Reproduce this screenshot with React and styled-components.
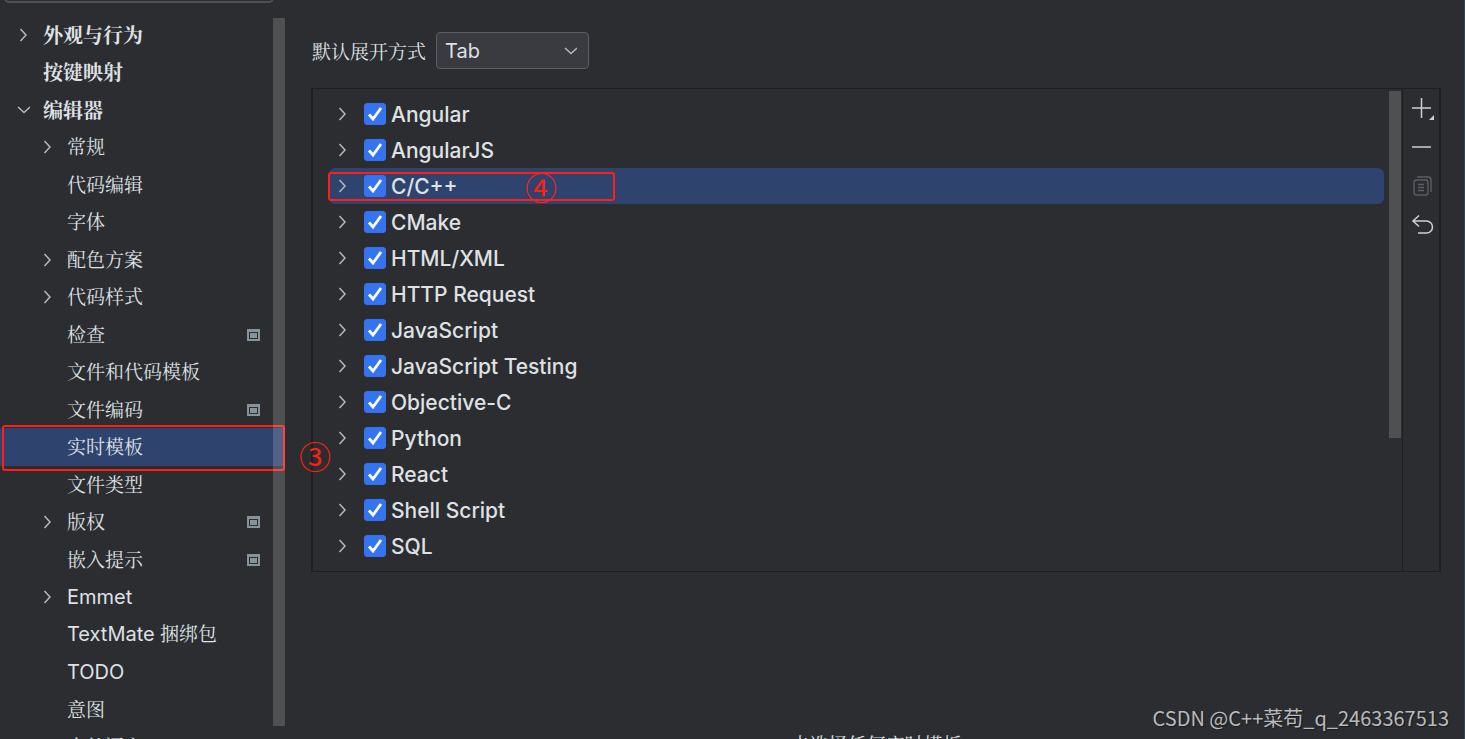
import { useState } from 'react';
import styled, { createGlobalStyle } from 'styled-components';

const GlobalStyle = createGlobalStyle`
	* {
		box-sizing: border-box;
	}

	body {
		margin: 0;
		background-color: #2b2d30;
		color: #dfe1e5;
		font-family: Inter, 'Noto Serif CJK SC', 'Noto Sans CJK SC', sans-serif;
		font-size: 20px;
	}

	button,
	input,
	select {
		font: inherit;
		color: inherit;
	}
`;

const sections = [
	{ title: '外观与行为', level: 0, arrow: 'right' },
	{ title: '按键映射', level: 0 },
	{ title: '编辑器', level: 0, arrow: 'down' },
	{ title: '常规', level: 1, arrow: 'right' },
	{ title: '代码编辑', level: 1 },
	{ title: '字体', level: 1 },
	{ title: '配色方案', level: 1, arrow: 'right' },
	{ title: '代码样式', level: 1, arrow: 'right' },
	{ title: '检查', level: 1, project: true },
	{ title: '文件和代码模板', level: 1 },
	{ title: '文件编码', level: 1, project: true },
	{ title: '实时模板', level: 1, marker: '③' },
	{ title: '文件类型', level: 1 },
	{ title: '版权', level: 1, arrow: 'right', project: true },
	{ title: '嵌入提示', level: 1, project: true },
	{ title: 'Emmet', level: 1, arrow: 'right', latin: true },
	{ title: 'TextMate', suffix: '捆绑包', level: 1, latin: true },
	{ title: 'TODO', level: 1, latin: true },
	{ title: '意图', level: 1 },
	{ title: '自然语言', level: 1 },
];

const groups = [
	'Angular',
	'AngularJS',
	'C/C++',
	'CMake',
	'HTML/XML',
	'HTTP Request',
	'JavaScript',
	'JavaScript Testing',
	'Objective-C',
	'Python',
	'React',
	'Shell Script',
	'SQL',
];

const Arrow = ({ direction = 'right' }) => (
	<svg width="14" height="14" viewBox="0 0 14 14" fill="none" stroke="#b4b8bf" strokeWidth="1.5">
		<path d={direction === 'down' ? 'M2 4l6 5.5L14 4' : 'M4.5 1l5.5 6-5.5 6'} />
	</svg>
);

const ProjectIcon = () => (
	<svg width="13" height="12" viewBox="0 0 13 12">
		<path fill="#87939a" fillRule="evenodd" d="M0 0h13v12H0zM2 3v7h9V3z" />
		<path fill="#87939a" d="M3 4h7v5H3z" />
	</svg>
);

const AddIcon = () => (
	<svg width="24" height="24" viewBox="0 0 24 24" fill="none" stroke="#ced0d6" strokeWidth="1.5">
		<path d="M10.5 1v20M1 11h19" />
		<path d="M23 18v5h-5z" fill="#ced0d6" stroke="none" />
	</svg>
);

const RemoveIcon = () => (
	<svg width="24" height="24" viewBox="0 0 24 24" stroke="#ced0d6" strokeWidth="1.5">
		<path d="M1 11h19" />
	</svg>
);

const CopyIcon = () => (
	<svg width="24" height="24" viewBox="0 0 24 24" fill="none" stroke="#5a5d63" strokeWidth="1.4">
		<rect x="3" y="5" width="14" height="15" rx="2.5" />
		<path d="M6 2h11a3 3 0 0 1 3 3v12M7 9.5h6M7 12.5h6M7 15.5h6" />
	</svg>
);

const RevertIcon = () => (
	<svg width="24" height="24" viewBox="0 0 24 24" fill="none" stroke="#ced0d6" strokeWidth="1.5">
		<path d="M8 1.5 2 7l6 5.5M2 7h13.5a6 6 0 0 1 0 12H7" />
	</svg>
);

const Page = styled.div`
	display: flex;
	position: relative;
	height: 100vh;
	overflow: hidden;
`;

const Sidebar = styled.aside`
	position: relative;
	flex: 0 0 285px;
	min-width: 0;
`;

const SearchArea = styled.div`
	display: flex;
	align-items: flex-end;
	height: 3px;
	margin: 0 11px 13px 4px;
	overflow: hidden;
`;

const SearchInput = styled.input`
	flex: 1;
	min-width: 0;
	height: 36px;
	border: 2px solid #4e5157;
	border-radius: 5px;
	background-color: #2b2d30;
`;

const Scrollbar = styled.div`
	position: absolute;
	top: ${({ $top }) => $top}px;
	right: ${({ $right = 0 }) => $right}px;
	bottom: ${({ $bottom }) => $bottom};
	width: 12px;
	background-color: rgba(255, 255, 255, 0.17);
`;

const SectionList = styled.ul`
	margin: 0;
	padding: 0;
	list-style: none;
`;

const SectionItem = styled.li`
	display: flex;
	align-items: center;
	position: relative;
	height: 37px;
	padding-left: ${({ $level }) => 16 + $level * 24}px;
	padding-right: 25px;
	background-color: ${({ $selected }) => ($selected ? '#2e436e' : 'transparent')};

	&:nth-child(even) {
		height: 38px;
	}
`;

const ArrowSlot = styled.span`
	display: flex;
	flex: 0 0 27px;
`;

const SectionButton = styled.button`
	flex: 1;
	padding: ${({ $latin }) => ($latin ? 0 : 2)}px 0 0;
	border: 0;
	background: none;
	font-size: ${({ $small }) => ($small ? 19 : 20)}px;
	font-weight: ${({ $bold }) => ($bold ? 700 : 400)};
	line-height: 28px;
	text-align: left;
	white-space: nowrap;
`;

const Suffix = styled.span`
	font-size: 19px;
`;

const Outline = styled.span`
	position: absolute;
	inset: ${({ $inset }) => $inset};
	width: ${({ $width }) => $width};
	border: 2px solid #ff1f14;
	border-radius: 3px;
	pointer-events: none;
`;

const Marker = styled.span`
	position: absolute;
	z-index: 1;
	top: ${({ $top }) => $top}px;
	left: ${({ $left }) => $left}px;
	color: #ff1f14;
	font-family: 'Noto Sans CJK SC', sans-serif;
	font-size: 32px;
	line-height: 36px;
`;

const Content = styled.main`
	flex: 1;
	min-width: 0;
	padding: 32px 23px 0 26px;
	border-right: 1px solid #35425c;
`;

const ExpandRow = styled.div`
	display: flex;
	align-items: center;
	gap: 10px;
	margin-bottom: 19px;
	padding-left: 1px;
`;

const ExpandLabel = styled.label`
	font-size: 19px;
`;

const SelectBox = styled.div`
	display: flex;
	align-items: center;
	position: relative;

	& svg {
		position: absolute;
		right: 12px;
		pointer-events: none;
	}
`;

const Select = styled.select`
	width: 153px;
	height: 37px;
	padding: 0 8px;
	appearance: none;
	border: 1px solid #5a5d63;
	border-radius: 4px;
	background-color: #393b40;
`;

const Panel = styled.section`
	display: flex;
	border: 1px solid #1e1f22;
	border-width: 1px 2px;
`;

const GroupArea = styled.div`
	position: relative;
	flex: 1;
	padding: 7px 18px 7px 16px;
	border-right: 1px solid #1e1f22;
`;

const GroupList = styled.ul`
	margin: 0;
	padding: 0;
	list-style: none;
`;

const GroupItem = styled.li`
	display: flex;
	align-items: center;
	position: relative;
	height: 36px;
	padding-left: 6px;
	border-radius: 6px;
	background-color: ${({ $selected }) => ($selected ? '#2e436e' : 'transparent')};
`;

const ArrowButton = styled.button`
	display: flex;
	width: 29px;
	padding: 0;
	border: 0;
	background: none;
`;

const GroupLabel = styled.label`
	display: flex;
	align-items: center;
	gap: 5px;
	font-size: 21px;
	font-weight: 500;
`;

const CheckSlot = styled.span`
	display: grid;

	& > * {
		grid-area: 1 / 1;
	}

	& svg {
		pointer-events: none;
	}
`;

const Checkbox = styled.input`
	width: 22px;
	height: 22px;
	margin: 0;
	appearance: none;
	border: 1px solid #6f737a;
	border-radius: 3px;

	&:checked {
		border-color: #3574f0;
		background-color: #3574f0;
	}
`;

const Toolbar = styled.div`
	display: flex;
	flex: 0 0 36px;
	flex-direction: column;
	align-items: flex-end;
	gap: 15px;
	padding: 8px 4px 8px 0;
`;

const ToolButton = styled.button`
	display: flex;
	padding: 0;
	border: 0;
	background: none;
`;

const EmptyText = styled.p`
	margin: 160px 0 0;
	font-size: 19px;
	line-height: 28px;
	text-align: center;
`;

const Watermark = styled.span`
	position: absolute;
	right: 16px;
	bottom: 7px;
	color: #b9babb;
	font-family: 'Noto Sans CJK SC', sans-serif;
	font-size: 20px;
	line-height: 28px;
	text-shadow: 1px 1px 1px #1b1c1e;
`;

const Section = ({ section, selected, onSelect }) => {
	const { title, suffix, level, arrow, project, latin, marker } = section;

	return (
		<SectionItem $level={level} $selected={selected}>
			<ArrowSlot>{arrow && <Arrow direction={arrow} />}</ArrowSlot>
			<SectionButton
				$bold={level === 0}
				$latin={latin}
				$small={level > 0 && !latin}
				onClick={onSelect}
			>
				{title}
				{suffix && <Suffix> {suffix}</Suffix>}
			</SectionButton>
			{project && <ProjectIcon />}
			{marker && (
				<>
					<Outline $inset="-3px 0 -5px 2px" />
					<Marker $top={9} $left={299}>
						{marker}
					</Marker>
				</>
			)}
		</SectionItem>
	);
};

const Group = ({ name, selected }) => {
	const [checked, setChecked] = useState(true);

	return (
		<GroupItem $selected={selected}>
			<ArrowButton aria-label={name}>
				<Arrow />
			</ArrowButton>
			<GroupLabel>
				<CheckSlot>
					<Checkbox
						type="checkbox"
						checked={checked}
						onChange={() => setChecked(!checked)}
					/>
					{checked && (
						<svg width="22" height="22" viewBox="0 0 22 22" fill="none" stroke="#fff">
							<path d="M5 11.5 9 16 17 5" strokeWidth="2.8" />
						</svg>
					)}
				</CheckSlot>
				{name}
			</GroupLabel>
			{selected && (
				<>
					<Outline $inset="4px auto 3px -1px" $width="287px" />
					<Marker $top={0} $left={196}>
						④
					</Marker>
				</>
			)}
		</GroupItem>
	);
};

const App = () => {
	const [section, setSection] = useState('实时模板');

	return (
		<Page>
			<GlobalStyle />
			<Sidebar>
				<SearchArea>
					<SearchInput type="search" aria-label="搜索" />
				</SearchArea>
				<SectionList>
					{sections.map((item) => (
						<Section
							key={item.title}
							section={item}
							selected={item.title === section}
							onSelect={() => setSection(item.title)}
						/>
					))}
				</SectionList>
				<Scrollbar $top={18} $bottom="13px" />
			</Sidebar>
			<Content>
				<ExpandRow>
					<ExpandLabel htmlFor="expand">默认展开方式</ExpandLabel>
					<SelectBox>
						<Select id="expand">
							<option>Tab</option>
						</Select>
						<Arrow direction="down" />
					</SelectBox>
				</ExpandRow>
				<Panel>
					<GroupArea>
						<GroupList>
							{groups.map((name) => (
								<Group key={name} name={name} selected={name === 'C/C++'} />
							))}
						</GroupList>
						<Scrollbar $top={2} $right={1} $bottom="27.5%" />
					</GroupArea>
					<Toolbar>
						<ToolButton aria-label="添加">
							<AddIcon />
						</ToolButton>
						<ToolButton aria-label="移除">
							<RemoveIcon />
						</ToolButton>
						<ToolButton aria-label="复制">
							<CopyIcon />
						</ToolButton>
						<ToolButton aria-label="还原">
							<RevertIcon />
						</ToolButton>
					</Toolbar>
				</Panel>
				<EmptyText>未选择任何实时模板</EmptyText>
			</Content>
			<Watermark>CSDN @C++菜苟_q_2463367513</Watermark>
		</Page>
	);
};

export default App;
